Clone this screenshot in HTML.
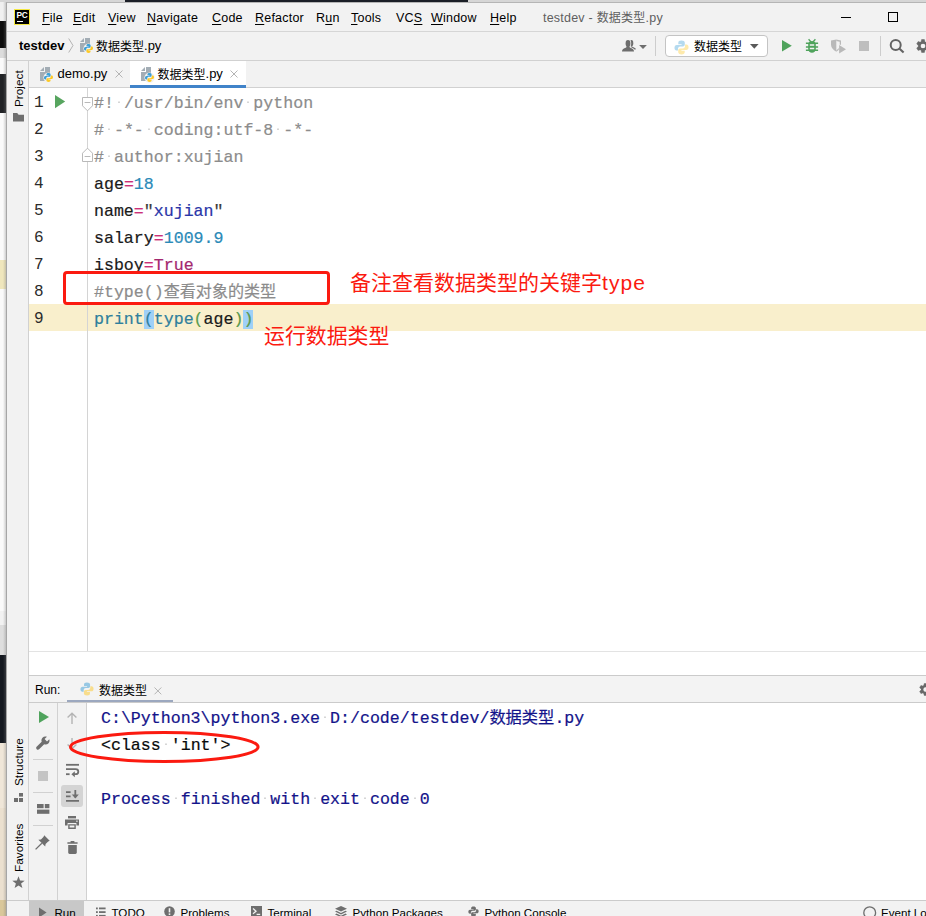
<!DOCTYPE html>
<html lang="zh">
<head>
<meta charset="utf-8">
<title>testdev - 数据类型.py</title>
<style>
*{box-sizing:border-box;margin:0;padding:0}
html,body{width:926px;height:916px;overflow:hidden;background:#f0f0f0}
body{position:relative;font-family:"Liberation Sans","Noto Sans CJK SC",sans-serif;font-size:13px;color:#000}
.abs{position:absolute}
svg{position:absolute;overflow:visible}
#win{position:absolute;left:6px;top:2px;width:920px;height:914px;background:#f2f2f2;border-left:1px solid #a6a6a6;border-top:1px solid #b5b5b5}
.bg{position:absolute}
.menu>span{position:absolute;top:9.5px;font-size:12.5px;letter-spacing:.22px;line-height:16px;color:#000;white-space:nowrap}
.menu u{text-decoration:underline;text-underline-offset:2px;text-decoration-thickness:1px}
.cj{font-size:12px}
.cjd{position:relative;top:.8px}
.ui{font-size:13px;line-height:16px;white-space:nowrap;position:absolute;color:#000}
.bb{font-size:11.6px;line-height:16px;white-space:nowrap;position:absolute;color:#000;top:904.5px}
.vt{position:absolute;font-size:11.8px;line-height:14px;white-space:nowrap;transform-origin:0 0;transform:rotate(-90deg);color:#000}
.code{-webkit-text-stroke:.2px currentColor;position:absolute;left:94px;font-family:"Liberation Mono","Noto Sans CJK SC",monospace;font-size:16.6px;line-height:27px;height:27px;white-space:pre;color:#1a1a1a}
.code .cj{font-size:16.07px}
.ln{position:absolute;left:34px;font-family:"Liberation Mono",monospace;font-size:16px;line-height:27px;height:27px;color:#2b2b2b}
.c{color:#8c8c8c}.n{color:#2b8ab8}.s{color:#2a36a8}.q{color:#3a3a3a}.k{color:#cc2f7a}.t{color:#a3286f}.b{color:#2f7f9c}.g{color:#5a9a4e}
.mb{background:#9fd0f7}
.sp{background:radial-gradient(circle at 50% 43%,#d6d6d6 0.6px,rgba(214,214,214,0) 1.1px)}
.con{-webkit-text-stroke:.2px currentColor;position:absolute;left:101px;font-family:"Liberation Mono","Noto Sans CJK SC",monospace;font-size:16.6px;line-height:27px;height:27px;white-space:pre}
.con .cj{font-size:16.25px}
.red{color:#fb1a10;position:absolute;white-space:nowrap;font-family:"Liberation Sans","Noto Sans CJK SC",sans-serif}
</style>
</head>
<body>
<!-- desktop background fragments -->
<div class="bg" style="left:0;top:0;width:926px;height:2px;background:#d6d6d6"></div>
<div class="bg" style="left:125px;top:0;width:343px;height:2px;background:#1b1f27"></div>
<div class="bg" style="left:0;top:2px;width:7px;height:19px;background:#f0f0f0"></div>
<div class="bg" style="left:0;top:21px;width:6px;height:27px;background:#0d0d0d"></div>
<div class="bg" style="left:0;top:48px;width:6px;height:10px;background:#dcdcdc"></div>
<div class="bg" style="left:0;top:58px;width:6px;height:16px;background:#fafafa"></div>
<div class="bg" style="left:0;top:74px;width:6px;height:39px;background:#202225"></div>
<div class="bg" style="left:0;top:113px;width:6px;height:147px;background:#fafafa"></div>
<div class="bg" style="left:0;top:260px;width:6px;height:29px;background:#efe6bc"></div>
<div class="bg" style="left:0;top:289px;width:6px;height:322px;background:#fafafa"></div>
<div class="bg" style="left:0;top:611px;width:6px;height:14px;background:#f2f2f2"></div>
<div class="bg" style="left:0;top:625px;width:6px;height:30px;background:#dedede"></div>
<div class="bg" style="left:0;top:655px;width:6px;height:88px;background:#14181f"></div>
<div class="bg" style="left:0;top:743px;width:6px;height:65px;background:#efe6d8"></div>
<div class="bg" style="left:0;top:808px;width:6px;height:92px;background:#ebe0cf"></div>
<div class="bg" style="left:0;top:900px;width:6px;height:16px;background:#d9c79a"></div>
<div class="bg" style="left:3px;top:2px;width:4px;height:914px;background:linear-gradient(90deg,rgba(120,120,120,0),rgba(120,120,120,.45))"></div>

<div id="win"></div>

<!-- ===== title bar ===== -->
<div class="abs" style="left:14px;top:9px;width:16px;height:16px;background:#000;border:1px solid #f4e742"></div>
<div class="abs" style="left:16.6px;top:10.6px;font:bold 8.3px/8px 'Liberation Sans',sans-serif;color:#fff;letter-spacing:-0.5px">PC</div>
<div class="abs" style="left:17px;top:21px;width:6px;height:1px;background:#fff"></div>
<div class="menu">
<span style="left:42px"><u>F</u>ile</span>
<span style="left:73px"><u>E</u>dit</span>
<span style="left:108px"><u>V</u>iew</span>
<span style="left:147px"><u>N</u>avigate</span>
<span style="left:212px"><u>C</u>ode</span>
<span style="left:255px"><u>R</u>efactor</span>
<span style="left:316px">R<u>u</u>n</span>
<span style="left:351px"><u>T</u>ools</span>
<span style="left:396px">VC<u>S</u></span>
<span style="left:431px"><u>W</u>indow</span>
<span style="left:490px"><u>H</u>elp</span>
<span style="left:543px;color:#5f5f5f">testdev - <span class="cj">数据类型</span>.py</span>
</div>
<div class="abs" style="left:841px;top:17px;width:10px;height:1px;background:#000"></div>
<div class="abs" style="left:888px;top:12px;width:10px;height:10px;border:1px solid #000"></div>

<!-- ===== nav bar ===== -->
<div class="abs" style="left:7px;top:31px;width:919px;height:1px;background:#d6d6d6"></div>
<div class="ui" style="left:19px;top:38px;font-weight:bold">testdev</div>
<svg style="left:68px;top:38px" width="6" height="15"><path d="M0.7 0.5 L5 7.5 L0.7 14.5" fill="none" stroke="#b4b4b4" stroke-width="1"/></svg>
<svg class="pyf" style="left:78px;top:37px" width="16" height="16"><use href="#pyfile"/></svg>
<div class="ui" style="left:96px;top:38px"><span class="cj cjd">数据类型</span>.py</div>
<div class="abs" style="left:7px;top:60px;width:919px;height:1px;background:#d1d1d1"></div>

<!-- nav right icons -->
<svg style="left:622px;top:39px" width="26" height="13">
 <g fill="#6e6e6e">
  <ellipse cx="9.4" cy="4.2" rx="1.9" ry="3.1"/><path d="M9 7.2 C11 8 13.4 8.6 14.2 10.2 L12.4 10.6 C11.4 9.6 10 9.2 8.6 8.6 Z"/>
  <g fill="none" stroke="#f2f2f2" stroke-width="1.6"><ellipse cx="6" cy="4.4" rx="2.4" ry="3.3"/><path d="M0 12.6 C0 10 1.6 9.4 4.2 8.4 L4.8 7 H7.2 L7.8 8.4 C10.4 9.4 12 10 12 12.6 Z"/></g>
  <ellipse cx="6" cy="4.4" rx="2.4" ry="3.3"/><path d="M0 12.6 C0 10 1.6 9.4 4.2 8.4 L4.8 6.6 H7.2 L7.8 8.4 C10.4 9.4 12 10 12 12.6 Z"/>
  <path d="M17.1 6 L24.9 6 L21 9.9 Z"/>
 </g>
</svg>
<div class="abs" style="left:655px;top:36px;width:1px;height:20px;background:#cdcdcd"></div>
<div class="abs" style="left:665px;top:35px;width:103px;height:22px;background:#fff;border:1px solid #c4c4c4;border-radius:4px"></div>
<svg style="left:674px;top:39.5px;opacity:.38" width="15" height="15" viewBox="0 0 16 16"><use href="#pylogo"/></svg>
<div class="ui" style="left:694px;top:39px"><span class="cj">数据类型</span></div>
<svg style="left:750px;top:44px" width="9" height="5"><path d="M0 0 L8.6 0 L4.3 4.8 Z" fill="#5a5a5a"/></svg>
<svg style="left:782px;top:40px" width="10" height="12"><path d="M0 0 L9.8 5.8 L0 11.6 Z" fill="#4fa35c"/></svg>
<!-- bug -->
<svg style="left:805px;top:39px" width="14" height="14" viewBox="0 0 14 14">
 <g fill="none" stroke="#4fa35c" stroke-width="1.5">
  <path d="M0.9 4.3 H13.1 M0.9 7.9 H13.1 M0.9 11.3 H13.1"/><path d="M3.6 0.3 L5.8 2.8 M10.4 0.3 L8.2 2.8" stroke-width="1.3"/>
 </g>
 <path d="M7 2 C9 2 10.3 3 10.6 4.4 H3.4 C3.7 3 5 2 7 2 Z M3.2 4.2 H10.8 V10 C10.8 12.3 9.1 13.8 7 13.8 C4.9 13.8 3.2 12.3 3.2 10 Z" fill="#4fa35c"/>
 <path d="M4.8 6.1 H9.2 M4.8 9.6 H9.2" stroke="#f2f2f2" stroke-width="1.5"/>
</svg>
<!-- coverage -->
<svg style="left:831px;top:39px" width="16" height="15">
 <g fill="#b9b9b9">
  <path d="M0 1.6 L5.3 0.6 V12.7 C2 11 0 8.5 0 5.5 Z"/>
  <path d="M5.3 0.6 L10 1.6 V5.8 H8.7 V2.7 L5.3 2 Z"/>
  <path d="M5.3 12.7 C6.3 12.2 7.2 11.5 7.8 10.8 V9 C7.2 10 6.2 10.8 5.3 11.2 Z"/>
  <path d="M8.1 5.9 L15 10.2 L8.1 14.6 Z"/>
 </g>
</svg>
<div class="abs" style="left:859px;top:41px;width:10px;height:10px;background:#bebebe"></div>
<div class="abs" style="left:880px;top:36px;width:1px;height:20px;background:#cdcdcd"></div>
<svg style="left:889px;top:38px" width="16" height="16"><circle cx="6.7" cy="7" r="5" fill="none" stroke="#646464" stroke-width="2"/><path d="M10 10.2 L14.6 14.6" stroke="#646464" stroke-width="2.1"/></svg>
<svg style="left:916px;top:38.9px" width="14" height="14" viewBox="-7 -7 14 14"><use href="#gear"/></svg>

<!-- ===== left tool strip ===== -->
<div class="abs" style="left:28px;top:61px;width:1px;height:839px;background:#d1d1d1"></div>
<div class="vt" style="left:12px;top:107px">Project</div>
<svg style="left:13px;top:113px" width="11" height="9"><path d="M0 0 H4.2 L5.6 1.8 H11 V8.6 H0 Z" fill="#6e6e6e"/></svg>
<div class="vt" style="left:12px;top:786px">Structure</div>
<svg style="left:14px;top:793px" width="9" height="9"><g fill="#6e6e6e"><rect x="5" y="0" width="4" height="3.6"/><rect x="0" y="5" width="4" height="4"/><rect x="5" y="5" width="4" height="4"/></g></svg>
<div class="vt" style="left:12px;top:872px">Favorites</div>
<svg style="left:12px;top:876px" width="13" height="13" viewBox="0 0 13 13"><path d="M6.5 0.3 L8.1 4.6 L12.7 4.8 L9.1 7.6 L10.4 12.1 L6.5 9.5 L2.6 12.1 L3.9 7.6 L0.3 4.8 L4.9 4.6 Z" fill="#6e6e6e"/></svg>

<!-- ===== tab bar ===== -->
<svg style="left:38px;top:66px" width="16" height="16"><use href="#pyfile"/></svg>
<div class="ui" style="left:57.5px;top:66px">demo.py</div>
<svg style="left:115px;top:70px" width="8" height="8"><path d="M0.5 0.5 L7.5 7.5 M7.5 0.5 L0.5 7.5" stroke="#b4b4b4" stroke-width="1"/></svg>
<div class="abs" style="left:130px;top:61px;width:116px;height:26px;background:#fff"></div>
<svg style="left:139px;top:66px" width="16" height="16"><use href="#pyfile"/></svg>
<div class="ui" style="left:157.5px;top:66px"><span class="cj cjd">数据类型</span>.py</div>
<svg style="left:230px;top:70px" width="8" height="8"><path d="M0.5 0.5 L7.5 7.5 M7.5 0.5 L0.5 7.5" stroke="#b4b4b4" stroke-width="1"/></svg>
<div class="abs" style="left:29px;top:87px;width:897px;height:1px;background:#d1d1d1"></div>
<div class="abs" style="left:130px;top:85px;width:116px;height:3px;background:#4083c9"></div>

<!-- ===== editor ===== -->
<div class="abs" style="left:29px;top:88px;width:897px;height:587px;background:#fff"></div>
<div class="abs" style="left:29px;top:304px;width:897px;height:27px;background:#f9efcc"></div>
<div class="abs" style="left:87px;top:88px;width:1px;height:564px;background:#d4d4d4"></div>
<div class="abs" style="left:29px;top:651px;width:897px;height:1px;background:#e3e3e3"></div>

<div class="ln" style="top:90px">1</div>
<div class="ln" style="top:117px">2</div>
<div class="ln" style="top:144px">3</div>
<div class="ln" style="top:171px">4</div>
<div class="ln" style="top:198px">5</div>
<div class="ln" style="top:225px">6</div>
<div class="ln" style="top:252px">7</div>
<div class="ln" style="top:279px">8</div>
<div class="ln" style="top:306px">9</div>

<svg style="left:55px;top:95px" width="11" height="14"><path d="M0 0 L10.2 6.6 L0 13.2 Z" fill="#57a55f"/></svg>
<!-- fold markers -->
<svg style="left:82px;top:97px" width="11" height="15"><path d="M0.5 0.5 H10.5 V8.8 L5.5 13.8 L0.5 8.8 Z" fill="#fff" stroke="#b9b9b9" stroke-width="1"/><path d="M2.6 5.5 H8.4" stroke="#b9b9b9" stroke-width="1"/></svg>
<svg style="left:82px;top:147px" width="11" height="15"><path d="M0.5 14.5 H10.5 V6.2 L5.5 1.2 L0.5 6.2 Z" fill="#fff" stroke="#b9b9b9" stroke-width="1"/><path d="M2.6 9.5 H8.4" stroke="#b9b9b9" stroke-width="1"/></svg>

<div class="code c" style="top:90px">#!<span class="sp"> </span>/usr/bin/env<span class="sp"> </span>python</div>
<div class="code c" style="top:117px">#<span class="sp"> </span>-*-<span class="sp"> </span>coding:utf-8<span class="sp"> </span>-*-</div>
<div class="code c" style="top:144px">#<span class="sp"> </span>author:xujian</div>
<div class="code" style="top:171px">age<span class="k">=</span><span class="n">18</span></div>
<div class="code" style="top:198px">name<span class="k">=</span><span class="q">"</span><span class="s">xujian</span><span class="q">"</span></div>
<div class="code" style="top:225px">salary<span class="k">=</span><span class="n">1009.9</span></div>
<div class="code" style="top:252px">isboy<span class="k">=</span><span class="t">True</span></div>
<div class="code c" style="top:279px">#type()<span class="cj">查看对象的类型</span></div>
<div class="code" style="top:306px"><span class="b">print</span><span class="b mb">(</span><span class="b">type</span><span class="g">(</span>age<span class="g">)</span><span class="g mb">)</span></div>

<!-- annotations -->
<div class="abs" style="left:63px;top:271px;width:267px;height:34px;border:3px solid #fb1a10;border-radius:4px"></div>
<div class="red" style="left:350px;top:269px;font-size:21px;line-height:28px">备注查看数据类型的关键字<span style="letter-spacing:1.05px">type</span></div>
<div class="red" style="left:264px;top:322px;font-size:20.9px;line-height:28px">运行数据类型</div>

<!-- ===== run panel ===== -->
<div class="abs" style="left:29px;top:675px;width:897px;height:1px;background:#cbcbcb"></div>
<div class="abs" style="left:29px;top:676px;width:897px;height:26px;background:#f3f3f3"></div>
<div class="ui" style="left:35px;top:682px;font-size:12px">Run:</div>
<svg style="left:80px;top:682px;opacity:.5" width="14" height="14" viewBox="0 0 16 16"><use href="#pylogo"/></svg>
<div class="ui" style="left:99px;top:682.5px"><span class="cj">数据类型</span></div>
<svg style="left:154px;top:687px" width="8" height="8"><path d="M0.5 0.5 L7.3 7.3 M7.3 0.5 L0.5 7.3" stroke="#b4b4b4" stroke-width="1"/></svg>
<div class="abs" style="left:67px;top:700px;width:106px;height:3px;background:#9ca8bf"></div>
<svg style="left:918.8px;top:682.5px" width="13" height="13" viewBox="-7 -7 14 14"><use href="#gear"/></svg>
<div class="abs" style="left:29px;top:702px;width:897px;height:1px;background:#cbcbcb"></div>
<div class="abs" style="left:87px;top:703px;width:839px;height:197px;background:#fff"></div>
<div class="abs" style="left:57px;top:703px;width:1px;height:197px;background:#d1d1d1"></div>
<div class="abs" style="left:86px;top:703px;width:1px;height:197px;background:#d1d1d1"></div>

<!-- col 1 icons -->
<svg style="left:39px;top:711px" width="10" height="12"><path d="M0 0 L10 6 L0 12 Z" fill="#4fa35c"/></svg>
<svg style="left:36px;top:736px" width="14" height="14" viewBox="0 0 14 14"><path d="M13.3 3.2 L11 5.5 L8.6 3.1 L10.9 0.8 C9.3 0.2 7.6 0.5 6.5 1.7 C5.4 2.8 5.2 4.3 5.7 5.7 L0.6 10.8 C0 11.4 0 12.5 0.7 13.2 C1.4 13.9 2.5 13.9 3.1 13.3 L8.2 8.2 C9.6 8.8 11.2 8.5 12.3 7.4 C13.5 6.3 13.8 4.7 13.3 3.2 Z" fill="#6e6e6e"/></svg>
<div class="abs" style="left:33px;top:759px;width:20px;height:1px;background:#d1d1d1"></div>
<div class="abs" style="left:38px;top:771px;width:10px;height:10px;background:#c4c4c4"></div>
<div class="abs" style="left:33px;top:792px;width:20px;height:1px;background:#d1d1d1"></div>
<svg style="left:37px;top:804px" width="13" height="10"><g fill="#6e6e6e"><rect x="0" y="0" width="6.6" height="4.2"/><rect x="7.8" y="0" width="4.6" height="4.2"/><rect x="0" y="5.6" width="12.4" height="4.2"/></g></svg>
<div class="abs" style="left:33px;top:825px;width:20px;height:1px;background:#d1d1d1"></div>
<svg style="left:35px;top:835px" width="15" height="15" viewBox="0 0 15 15"><path d="M9.2 0.3 L14.7 5.8 L13.2 6.4 L10.6 9 L10.2 11.6 L3.4 4.8 L6 4.4 L8.6 1.8 Z" fill="#6e6e6e"/><path d="M6.8 8.2 L0.6 14.4" stroke="#6e6e6e" stroke-width="1.3"/></svg>

<!-- col 2 icons -->
<svg style="left:67px;top:712px" width="10" height="12"><path d="M5 12 V1.2 M0.6 5.6 L5 1.2 L9.4 5.6" fill="none" stroke="#b4b4b4" stroke-width="1.4"/></svg>
<svg style="left:67px;top:738px" width="10" height="12"><path d="M5 0 V10.8 M0.6 6.4 L5 10.8 L9.4 6.4" fill="none" stroke="#b4b4b4" stroke-width="1.4"/></svg>
<svg style="left:66px;top:764px" width="13" height="14" viewBox="0 0 13 14"><g fill="none" stroke="#6e6e6e" stroke-width="1.8"><path d="M0 0.8 H13"/><path d="M0 5.2 H9.6 C11.6 5.2 12.3 6.4 12.3 7.7 C12.3 9 11.6 10.2 9.6 10.2 H7"/><path d="M0 10.2 H3.6"/></g><path d="M8.8 7.2 V13.2 L5.4 10.2 Z" fill="#6e6e6e"/></svg>
<div class="abs" style="left:61px;top:785px;width:22px;height:22px;background:#d4d4d4;border-radius:3px"></div>
<svg style="left:66px;top:790px" width="13" height="12" viewBox="0 0 13 12"><g fill="none" stroke="#6e6e6e" stroke-width="1.8"><path d="M0 2.2 H4.6 M0 6.4 H4.6 M0 10.8 H13"/><path d="M9.3 0 V7.4"/></g><path d="M5.8 4.6 H12.8 L9.3 8.6 Z" fill="#6e6e6e"/></svg>
<svg style="left:65px;top:816px" width="14" height="13" viewBox="0 0 14 13"><g fill="#6e6e6e"><rect x="3" y="0" width="8" height="2.4"/><path d="M0 3.6 H14 V9.4 H11.4 V7 H2.6 V9.4 H0 Z"/><path d="M3.2 8.2 H10.8 V13 H3.2 Z M4.6 9.6 V11.6 H9.4 V9.6 Z" fill-rule="evenodd"/></g><rect x="11.2" y="4.6" width="1.4" height="1.2" fill="#f2f2f2"/></svg>
<svg style="left:67px;top:841px" width="11" height="13" viewBox="0 0 11 13"><g fill="#6e6e6e"><path d="M3.6 0 H7.4 V1.2 H10.6 V2.8 H0.4 V1.2 H3.6 Z"/><path d="M1.2 4 H9.8 V11.6 C9.8 12.4 9.2 13 8.4 13 H2.6 C1.8 13 1.2 12.4 1.2 11.6 Z"/></g></svg>

<div class="con" style="top:705px;color:#13138a">C:\Python3\python3.exe<span class="sp"> </span>D:/code/testdev/<span class="cj">数据类型</span>.py</div>
<div class="con" style="top:732px;color:#0a0a0a">&lt;class<span class="sp"> </span>'int'&gt;</div>
<div class="con" style="top:786px;color:#13138a">Process<span class="sp"> </span>finished<span class="sp"> </span>with<span class="sp"> </span>exit<span class="sp"> </span>code<span class="sp"> </span>0</div>

<svg style="left:60px;top:725px" width="210" height="46"><ellipse cx="104.3" cy="22" rx="93.8" ry="14.5" fill="none" stroke="#fb1a10" stroke-width="3"/></svg>

<!-- ===== bottom bar ===== -->
<div class="abs" style="left:7px;top:900px;width:919px;height:1px;background:#cbcbcb"></div>
<div class="abs" style="left:29px;top:901px;width:55px;height:15px;background:#c8c8c8"></div>
<svg style="left:39px;top:907px" width="8" height="10"><path d="M0 0.5 L7.6 5.5 L0 10.5 Z" fill="#6e6e6e"/></svg>
<div class="bb" style="left:54.5px">Run</div>
<svg style="left:96px;top:907px" width="10" height="10"><g fill="#6e6e6e"><rect x="0" y="0.5" width="1.8" height="1.8"/><rect x="3" y="0.5" width="6.6" height="1.8"/><rect x="0" y="4.2" width="1.8" height="1.8"/><rect x="3" y="4.2" width="6.6" height="1.8"/><rect x="0" y="7.9" width="1.8" height="1.8"/><rect x="3" y="7.9" width="6.6" height="1.8"/></g></svg>
<div class="bb" style="left:111.5px">TODO</div>
<svg style="left:164px;top:906px" width="11" height="11"><circle cx="5.5" cy="5.5" r="5.3" fill="#6e6e6e"/><rect x="4.7" y="2.2" width="1.6" height="4.2" fill="#f2f2f2"/><rect x="4.7" y="7.4" width="1.6" height="1.6" fill="#f2f2f2"/></svg>
<div class="bb" style="left:180.5px">Problems</div>
<svg style="left:251px;top:906px" width="11" height="11"><rect x="0" y="0" width="11" height="11" fill="#6e6e6e"/><path d="M2 2.6 L5 5.2 L2 7.8" fill="none" stroke="#f2f2f2" stroke-width="1.3"/><path d="M5.6 8.4 H9.2" stroke="#f2f2f2" stroke-width="1.3"/></svg>
<div class="bb" style="left:267.5px">Terminal</div>
<svg style="left:335px;top:906px" width="12" height="11" viewBox="0 0 12 11"><g fill="#6e6e6e"><path d="M6 0 L12 2.8 L6 5.6 L0 2.8 Z"/><path d="M1.6 4.8 L0 5.6 L6 8.4 L12 5.6 L10.4 4.8 L6 6.9 Z"/><path d="M1.6 7.6 L0 8.4 L6 11.2 L12 8.4 L10.4 7.6 L6 9.7 Z"/></g></svg>
<div class="bb" style="left:352.5px">Python Packages</div>
<svg style="left:468px;top:906px" width="11" height="11" viewBox="0 0 16 16"><g fill="#6e6e6e"><use href="#pylogoshape"/></g></svg>
<div class="bb" style="left:484.5px">Python Console</div>
<svg style="left:863px;top:906px" width="14" height="14"><circle cx="6.7" cy="6.7" r="5.9" fill="none" stroke="#6e6e6e" stroke-width="1.3"/></svg>
<div class="bb" style="left:881px;top:905px">Event Log</div>

<!-- symbol defs -->
<svg width="0" height="0" style="left:-10px;top:-10px">
 <defs>
  <g id="pylogoshape">
   <path d="M7.9 0.6 C5.6 0.6 4.6 1.6 4.6 2.9 V4.6 H8.1 V5.3 H2.9 C1.5 5.3 0.5 6.5 0.5 8.3 C0.5 10.1 1.4 11.2 2.8 11.2 H4.2 V9.3 C4.2 8 5.3 6.9 6.6 6.9 H9.6 C10.7 6.9 11.5 6 11.5 4.9 V2.9 C11.5 1.6 10.2 0.6 7.9 0.6 Z"/>
   <path d="M8.1 15.4 C10.4 15.4 11.4 14.4 11.4 13.1 V11.4 H7.9 V10.7 H13.1 C14.5 10.7 15.5 9.5 15.5 7.7 C15.5 5.9 14.6 4.8 13.2 4.8 H11.8 V6.7 C11.8 8 10.7 9.1 9.4 9.1 H6.4 C5.3 9.1 4.5 10 4.5 11.1 V13.1 C4.5 14.4 5.8 15.4 8.1 15.4 Z"/>
  </g>
  <g id="pylogo">
   <path fill="#3d9fd6" d="M7.9 0.6 C5.6 0.6 4.6 1.6 4.6 2.9 V4.6 H8.1 V5.3 H2.9 C1.5 5.3 0.5 6.5 0.5 8.3 C0.5 10.1 1.4 11.2 2.8 11.2 H4.2 V9.3 C4.2 8 5.3 6.9 6.6 6.9 H9.6 C10.7 6.9 11.5 6 11.5 4.9 V2.9 C11.5 1.6 10.2 0.6 7.9 0.6 Z"/>
   <path fill="#fdc927" d="M8.1 15.4 C10.4 15.4 11.4 14.4 11.4 13.1 V11.4 H7.9 V10.7 H13.1 C14.5 10.7 15.5 9.5 15.5 7.7 C15.5 5.9 14.6 4.8 13.2 4.8 H11.8 V6.7 C11.8 8 10.7 9.1 9.4 9.1 H6.4 C5.3 9.1 4.5 10 4.5 11.1 V13.1 C4.5 14.4 5.8 15.4 8.1 15.4 Z"/>
  </g>
  <g id="pyfile">
   <path d="M2 5 L6 1 V5 Z" fill="#a3adb5"/>
   <path d="M7 1 H12 V6 H7 Z" fill="#a3adb5"/>
   <path d="M2 6 H12 V15 H2 Z" fill="#a3adb5"/>
   <circle cx="10.6" cy="11.6" r="5.2" fill="#f2f2f2"/>
   <g transform="translate(5.7,6.7) scale(0.6)"><use href="#pylogo"/></g>
  </g>
  <g id="gear">
   <circle r="3.6" fill="none" stroke="#686868" stroke-width="2.5"/>
   <path fill="#686868" stroke="#686868" stroke-width="0.5" stroke-linejoin="round" d="M-1.85 -4.54 L-1.37 -6.46 L1.37 -6.46 L1.85 -4.54 L1.32 -3.24 L-1.32 -3.24 Z M3.00 -3.87 L4.90 -4.42 L6.28 -2.04 L4.85 -0.67 L3.47 -0.48 L2.15 -2.77 Z M4.85 0.67 L6.28 2.04 L4.90 4.42 L3.00 3.87 L2.15 2.77 L3.47 0.48 Z M1.85 4.54 L1.37 6.46 L-1.37 6.46 L-1.85 4.54 L-1.32 3.24 L1.32 3.24 Z M-3.00 3.87 L-4.90 4.42 L-6.28 2.04 L-4.85 0.67 L-3.47 0.48 L-2.15 2.77 Z M-4.85 -0.67 L-6.28 -2.04 L-4.90 -4.42 L-3.00 -3.87 L-2.15 -2.77 L-3.47 -0.48 Z"/>
  </g>
 </defs>
</svg>
</body>
</html>
